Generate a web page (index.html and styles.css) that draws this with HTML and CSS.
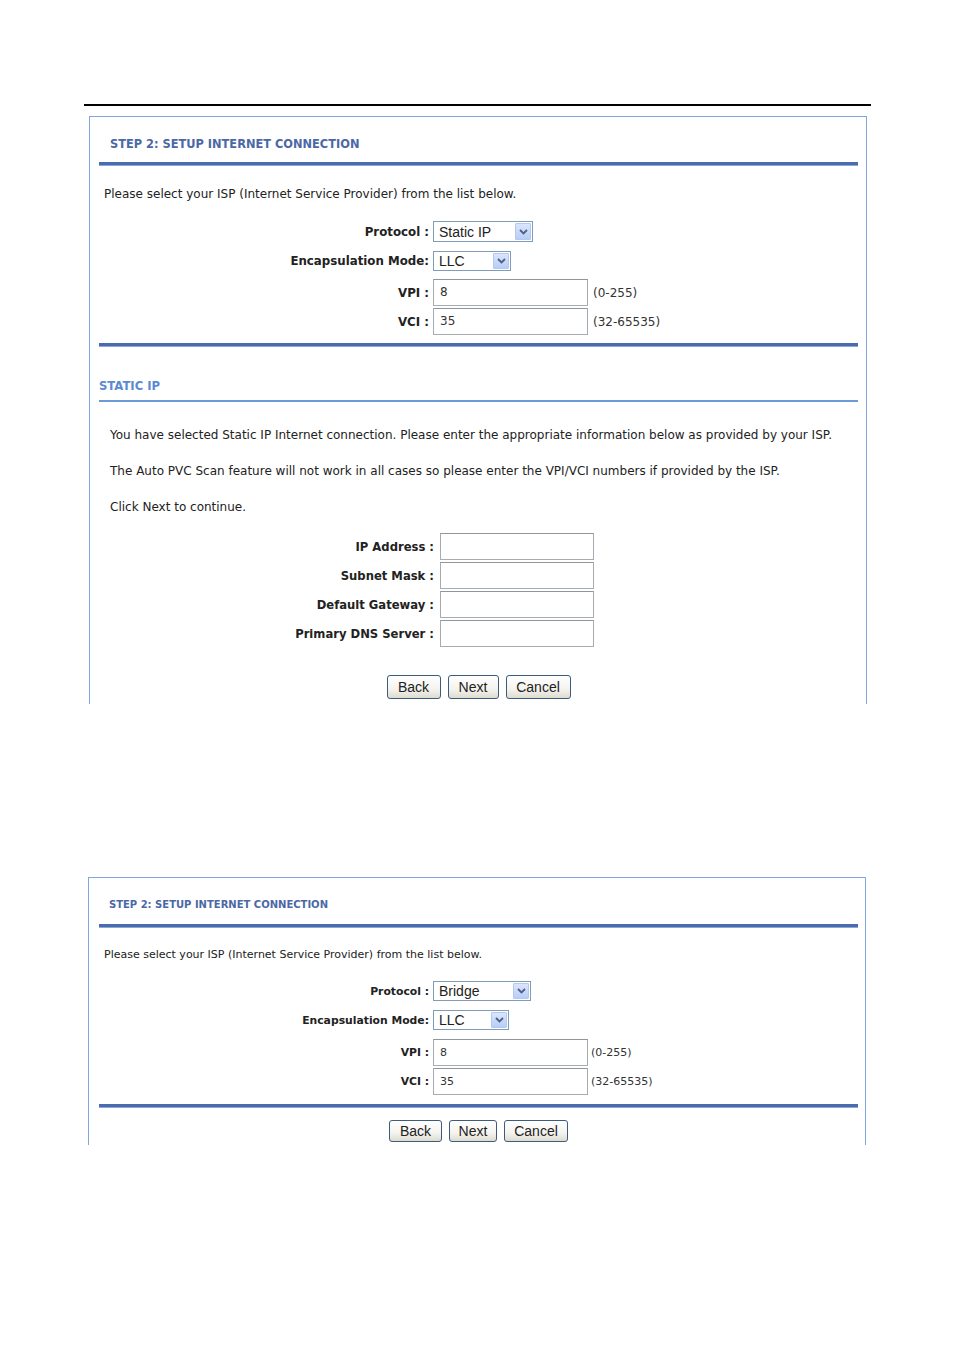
FILE: index.html
```html
<!DOCTYPE html>
<html>
<head>
<meta charset="utf-8">
<title>Setup Internet Connection</title>
<link rel="stylesheet" href="styles.css">
</head>
<body>
<div class="page">
  <div class="toprule"></div>

  <div class="panel panel-one">
    <div class="sec">
      <div class="head">STEP 2: SETUP INTERNET CONNECTION</div>
      <div class="bar"></div>
      <p class="intro">Please select your ISP (Internet Service Provider) from the list below.</p>
      <div class="row r-sel1">
        <div class="lbl">Protocol :</div>
        <div class="sel w100"><span class="seltxt">Static IP</span><span class="arr"><svg width="9" height="6" viewBox="0 0 9 6"><path d="M1 1 L4.5 4.5 L8 1" fill="none" stroke="#4d6185" stroke-width="1.8"/></svg></span></div>
      </div>
      <div class="row r-sel2">
        <div class="lbl">Encapsulation Mode:</div>
        <div class="sel w78"><span class="seltxt">LLC</span><span class="arr"><svg width="9" height="6" viewBox="0 0 9 6"><path d="M1 1 L4.5 4.5 L8 1" fill="none" stroke="#4d6185" stroke-width="1.8"/></svg></span></div>
      </div>
      <div class="row r-in1">
        <div class="lbl">VPI :</div>
        <div class="inp w155">8</div>
        <div class="hint">(0-255)</div>
      </div>
      <div class="row r-in2">
        <div class="lbl">VCI :</div>
        <div class="inp w155">35</div>
        <div class="hint">(32-65535)</div>
      </div>
      <div class="bar bar-end"></div>

      <div class="subhead">STATIC IP</div>
      <p class="para p1">You have selected Static IP Internet connection. Please enter the appropriate information below as provided by your ISP.</p>
      <p class="para">The Auto PVC Scan feature will not work in all cases so please enter the VPI/VCI numbers if provided by the ISP.</p>
      <p class="para">Click Next to continue.</p>

      <div class="iprows">
        <div class="row iprow"><div class="lbl lbl-ip">IP Address :</div><div class="inp w154"></div></div>
        <div class="row iprow"><div class="lbl lbl-ip">Subnet Mask :</div><div class="inp w154"></div></div>
        <div class="row iprow"><div class="lbl lbl-ip">Default Gateway :</div><div class="inp w154"></div></div>
        <div class="row iprow"><div class="lbl lbl-ip">Primary DNS Server :</div><div class="inp w154"></div></div>
      </div>

      <div class="btns btns-one">
        <button class="btn b-back">Back</button>
        <button class="btn b-next">Next</button>
        <button class="btn b-cancel">Cancel</button>
      </div>
    </div>
  </div>

  <div class="panel panel-two">
    <div class="sec sec-two">
      <div class="head head-two">STEP 2: SETUP INTERNET CONNECTION</div>
      <div class="bar"></div>
      <p class="intro intro-two">Please select your ISP (Internet Service Provider) from the list below.</p>
      <div class="row r2-sel1">
        <div class="lbl lbl-two">Protocol :</div>
        <div class="sel w98"><span class="seltxt">Bridge</span><span class="arr"><svg width="9" height="6" viewBox="0 0 9 6"><path d="M1 1 L4.5 4.5 L8 1" fill="none" stroke="#4d6185" stroke-width="1.8"/></svg></span></div>
      </div>
      <div class="row r2-sel2">
        <div class="lbl lbl-two">Encapsulation Mode:</div>
        <div class="sel w76"><span class="seltxt">LLC</span><span class="arr"><svg width="9" height="6" viewBox="0 0 9 6"><path d="M1 1 L4.5 4.5 L8 1" fill="none" stroke="#4d6185" stroke-width="1.8"/></svg></span></div>
      </div>
      <div class="row r2-in1">
        <div class="lbl lbl-two">VPI :</div>
        <div class="inp w155 inp-two">8</div>
        <div class="hint hint-two">(0-255)</div>
      </div>
      <div class="row r2-in2">
        <div class="lbl lbl-two">VCI :</div>
        <div class="inp w155 inp-two">35</div>
        <div class="hint hint-two">(32-65535)</div>
      </div>
      <div class="bar bar-end2"></div>
      <div class="btns btns-two">
        <button class="btn btn-two b2-back">Back</button>
        <button class="btn btn-two b2-next">Next</button>
        <button class="btn btn-two b2-cancel">Cancel</button>
      </div>
    </div>
  </div>
</div>
</body>
</html>
```

FILE: styles.css
```css
* { box-sizing: border-box; }
html, body { margin: 0; padding: 0; background: #fff; }
body {
  font-family: "DejaVu Sans", Verdana, sans-serif;
  font-size: 12px;
  color: #222;
  width: 954px;
  height: 1351px;
}
.page { padding-top: 104px; }
.toprule {
  margin-left: 84px;
  width: 787px;
  height: 2px;
  background: #000;
}
.panel {
  border: 1px solid #7fa7da;
  border-bottom: none;
  width: 778px;
}
.panel-one {
  margin-top: 10px;
  margin-left: 89px;
  height: 588px;
}
.panel-two {
  margin-top: 173px;
  margin-left: 88px;
  height: 268px;
}
.sec { padding: 0 8px 0 9px; }
.sec-two { padding: 0 7px 0 10px; }
.head {
  padding-top: 19px;
  padding-left: 11px;
  height: 45px;
  line-height: 16px;
  font-weight: bold;
  color: #4b68a6;
  font-size: 11.4px;
}
.head-two { padding-top: 19px; padding-left: 10px; height: 46px; font-size: 10px; }
.bar {
  height: 4px;
  background: #4a6cae;
  border-bottom: 1px solid #8ea6d4;
}
.intro {
  margin: 20px 0 0 5px;
  line-height: 16px;
  height: 16px;
  white-space: nowrap;
}
.intro-two { margin: 19px 0 0 5px; font-size: 11px; }
.row { display: flex; align-items: center; }
.lbl {
  width: 334px;
  padding-right: 4px;
  text-align: right;
  font-weight: bold;
  font-size: 11.8px;
  white-space: nowrap;
}
.lbl-ip { width: 341px; padding-right: 6px; font-size: 11.6px; }
.lbl-two { width: 334px; padding-right: 4px; font-size: 10.8px; }
.r-sel1 { margin-top: 19px; height: 21px; }
.r-sel2 { margin-top: 9px; height: 20px; }
.r-in1 { margin-top: 8px; height: 27px; }
.r-in2 { margin-top: 2px; height: 27px; }
.r2-sel1 { margin-top: 18px; height: 20px; }
.r2-sel2 { margin-top: 9px; height: 20px; }
.r2-in1 { margin-top: 9px; height: 27px; }
.r2-in2 { margin-top: 2px; height: 27px; }
.sel {
  height: 100%;
  border: 1px solid #7f9db9;
  background: #fff;
  display: flex;
  align-items: center;
  justify-content: space-between;
  padding: 1px;
  font-family: "Liberation Sans", Arial, sans-serif;
  font-size: 14px;
  color: #222;
}
.seltxt { padding-left: 4px; line-height: 16px; }
.arr {
  width: 16px;
  height: 100%;
  border: 1px solid #b5c8ef;
  border-radius: 1px;
  background: linear-gradient(#dbe5fc, #b8cdf7);
  display: flex;
  align-items: center;
  justify-content: center;
}
.w100 { width: 100px; }
.w78 { width: 78px; }
.w98 { width: 98px; }
.w76 { width: 76px; }
.inp {
  height: 100%;
  border: 1px solid #a5acb2;
  border-top-color: #8f969c;
  background: #fff;
  padding-left: 6px;
  line-height: 25px;
  color: #333;
}
.inp-two { font-size: 11px; }
.w155 { width: 155px; }
.w154 { width: 154px; }
.hint { padding-left: 5px; color: #333; }
.hint-two { padding-left: 3px; font-size: 11px; }
.bar-end { margin-top: 8px; }
.bar-end2 { margin-top: 9px; }
.subhead {
  margin-top: 31px;
  padding-bottom: 6px;
  line-height: 16px;
  font-weight: bold;
  color: #5b8ad2;
  font-size: 11.6px;
  border-bottom: 2px solid #6b9ad8;
}
.para {
  margin: 0 0 0 11px;
  line-height: 16px;
  white-space: nowrap;
  margin-top: 20px;
}
.p1 { margin-top: 25px; }
.iprows { margin-top: 18px; display: flex; flex-direction: column; gap: 2px; }
.iprow { height: 27px; }
.btns {
  display: flex;
  justify-content: center;
  gap: 7px;
}
.btns-one { margin-top: 28px; }
.btns-two { margin-top: 12px; }
.btn {
  height: 24px;
  border: 1px solid #3d5b7e;
  border-radius: 3px;
  background: linear-gradient(#ffffff 0%, #f4f3ee 60%, #dedbcf 100%);
  font-family: "Liberation Sans", Arial, sans-serif;
  font-size: 14px;
  color: #222;
  padding: 0;
  margin: 0;
}
.btn-two { height: 22px; }
.b-back { width: 54px; }
.b-next { width: 51px; }
.b-cancel { width: 65px; }
.b2-back { width: 53px; }
.b2-next { width: 48px; }
.b2-cancel { width: 64px; }
```
